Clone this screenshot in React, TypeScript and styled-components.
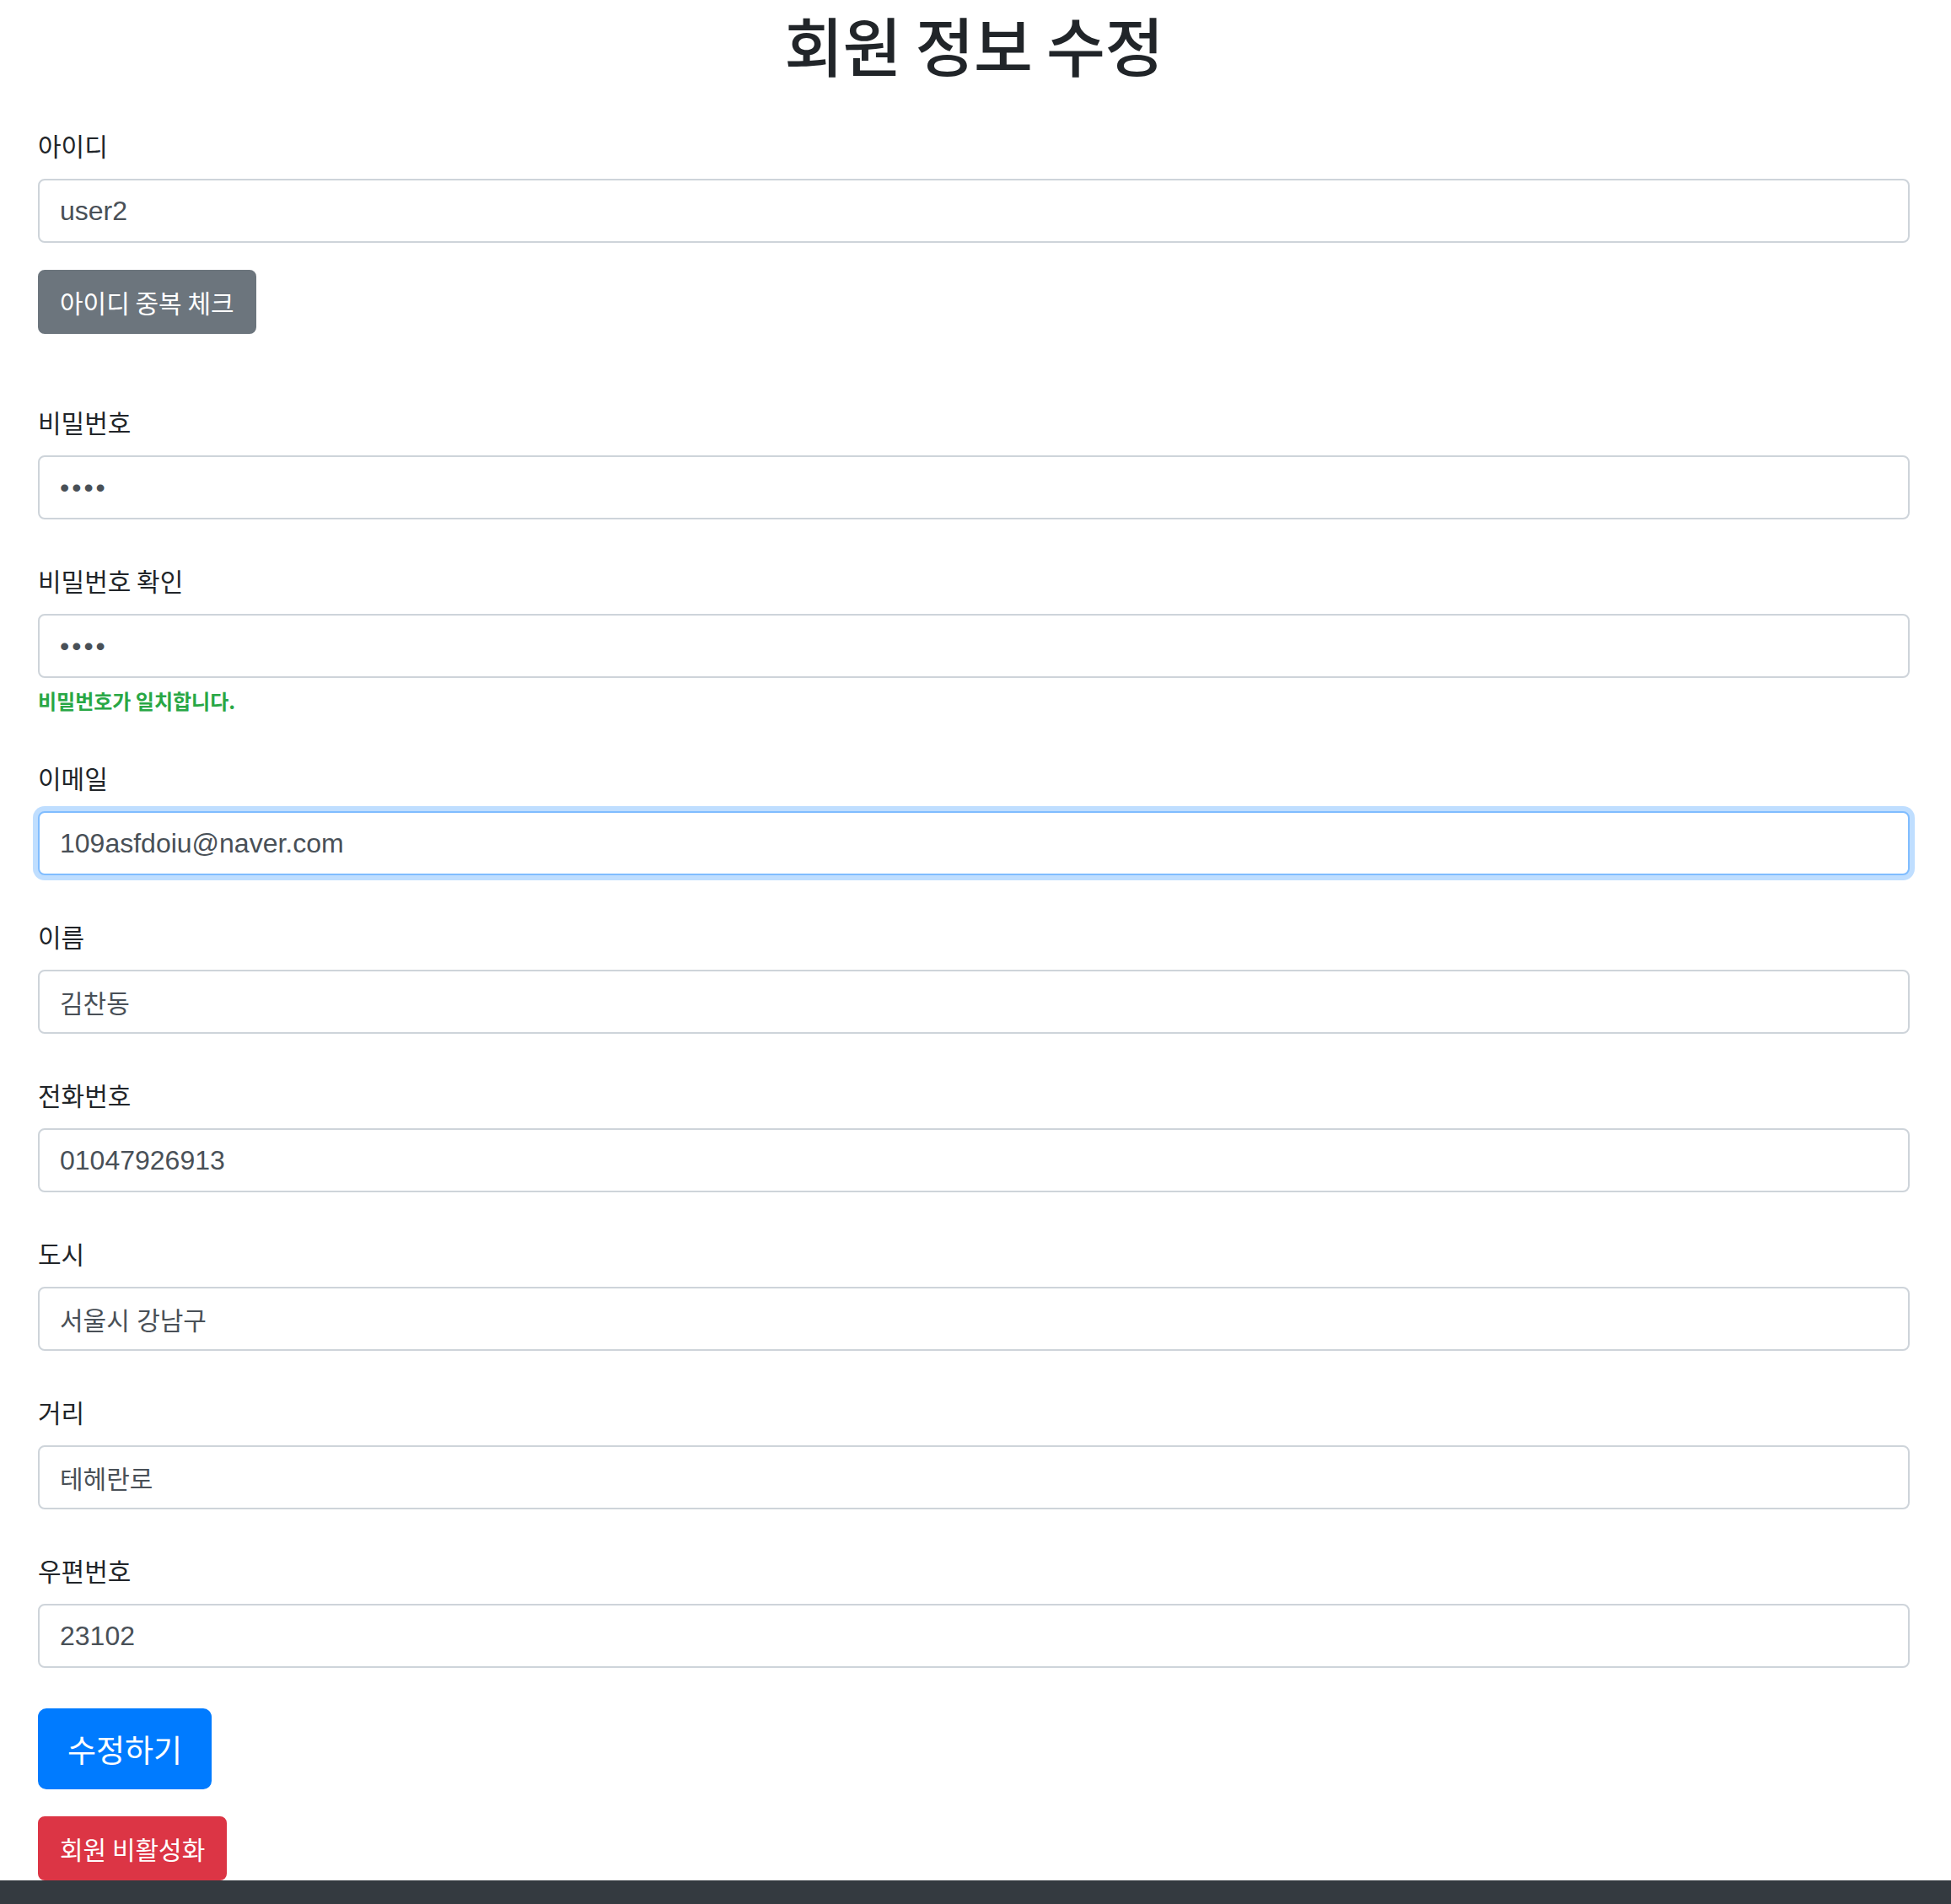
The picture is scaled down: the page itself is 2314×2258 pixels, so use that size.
import React from "react";
import styled, { createGlobalStyle, css } from "styled-components";

const GlobalStyle = createGlobalStyle`
  html, body {
    margin: 0;
    padding: 0;
    background: #ffffff;
  }
  body {
    font-family: "Liberation Sans", "Noto Sans CJK KR", sans-serif;
    color: #212529;
  }
  * { box-sizing: border-box; }
`;

const KO = `"Noto Sans CJK KR", "Liberation Sans", sans-serif`;

const Page = styled.main`
  padding: 4px 49px 0 45px;
`;

const Title = styled.h1`
  margin: 0 0 48px;
  text-align: center;
  font-family: ${KO};
  font-size: 76px;
  font-weight: 500;
  line-height: 96px;
  letter-spacing: -0.5px;
  color: #212529;
`;

const Form = styled.form`
  display: flex;
  flex-direction: column;
`;

const Group = styled.div`
  display: flex;
  flex-direction: column;
  margin-bottom: 48px;
`;

const Label = styled.label`
  font-family: ${KO};
  font-size: 30px;
  line-height: 48px;
  margin-bottom: 16px;
  color: #212529;
`;

const Input = styled.input<{ $ko?: boolean; $focus?: boolean }>`
  width: 100%;
  height: 76px;
  padding: 12px 24px;
  border: 2px solid #ced4da;
  border-radius: 8px;
  background: #ffffff;
  font-family: "Liberation Sans", "Noto Sans CJK KR", sans-serif;
  font-size: ${(p) => (p.$ko ? "30px" : "32px")};
  color: #495057;
  outline: none;
  &[type="password"] {
    letter-spacing: 3px;
  }
  ${(p) =>
    p.$focus &&
    css`
      border-color: #80bdff;
      box-shadow: 0 0 0 6px rgba(0, 123, 255, 0.25);
    `}
`;

const CheckRow = styled.div`
  display: flex;
  padding: 32px 0;
`;

const variants = {
  primary: "#007bff",
  secondary: "#6c757d",
  danger: "#dc3545",
};

const Button = styled.button<{ $variant: keyof typeof variants; $large?: boolean }>`
  align-self: flex-start;
  border: 2px solid ${(p) => variants[p.$variant]};
  background: ${(p) => variants[p.$variant]};
  color: #ffffff;
  font-family: ${KO};
  cursor: pointer;
  ${(p) =>
    p.$large
      ? css`
          padding: 16px 33px;
          font-size: 37px;
          line-height: 60px;
          border-radius: 10px;
        `
      : css`
          padding: 12px 24px;
          font-size: 30px;
          line-height: 48px;
          border-radius: 8px;
        `}
`;

const Feedback = styled.div`
  margin-top: 8px;
  font-family: ${KO};
  font-size: 24px;
  line-height: 38px;
  font-weight: 700;
  color: #28a745;
`;

const Actions = styled.div`
  display: flex;
  flex-direction: column;
  align-items: flex-start;
  gap: 32px;
`;

const Footer = styled.footer`
  height: 80px;
  background: #343a40;
`;

type Field = { id: string; label: string; value: string; ko?: boolean; focus?: boolean };

const fields: Field[] = [
  { id: "email", label: "이메일", value: "109asfdoiu@naver.com", focus: true },
  { id: "name", label: "이름", value: "김찬동", ko: true },
  { id: "phone", label: "전화번호", value: "01047926913" },
  { id: "city", label: "도시", value: "서울시 강남구", ko: true },
  { id: "street", label: "거리", value: "테헤란로", ko: true },
  { id: "zip", label: "우편번호", value: "23102" },
];

export default function App() {
  return (
    <>
      <GlobalStyle />
      <Page>
        <Title>회원 정보 수정</Title>
        <Form onSubmit={(e) => e.preventDefault()}>
          <Group>
            <Label htmlFor="userId">아이디</Label>
            <Input id="userId" defaultValue="user2" />
            <CheckRow>
              <Button type="button" $variant="secondary">
                아이디 중복 체크
              </Button>
            </CheckRow>
          </Group>
          <Group>
            <Label htmlFor="pw">비밀번호</Label>
            <Input id="pw" type="password" defaultValue="1234" />
          </Group>
          <Group>
            <Label htmlFor="pw2">비밀번호 확인</Label>
            <Input id="pw2" type="password" defaultValue="1234" />
            <Feedback>비밀번호가 일치합니다.</Feedback>
          </Group>
          {fields.map((f) => (
            <Group key={f.id}>
              <Label htmlFor={f.id}>{f.label}</Label>
              <Input id={f.id} defaultValue={f.value} $ko={f.ko} $focus={f.focus} />
            </Group>
          ))}
          <Actions>
            <Button type="submit" $variant="primary" $large>
              수정하기
            </Button>
            <Button type="button" $variant="danger">
              회원 비활성화
            </Button>
          </Actions>
        </Form>
      </Page>
      <Footer />
    </>
  );
}
